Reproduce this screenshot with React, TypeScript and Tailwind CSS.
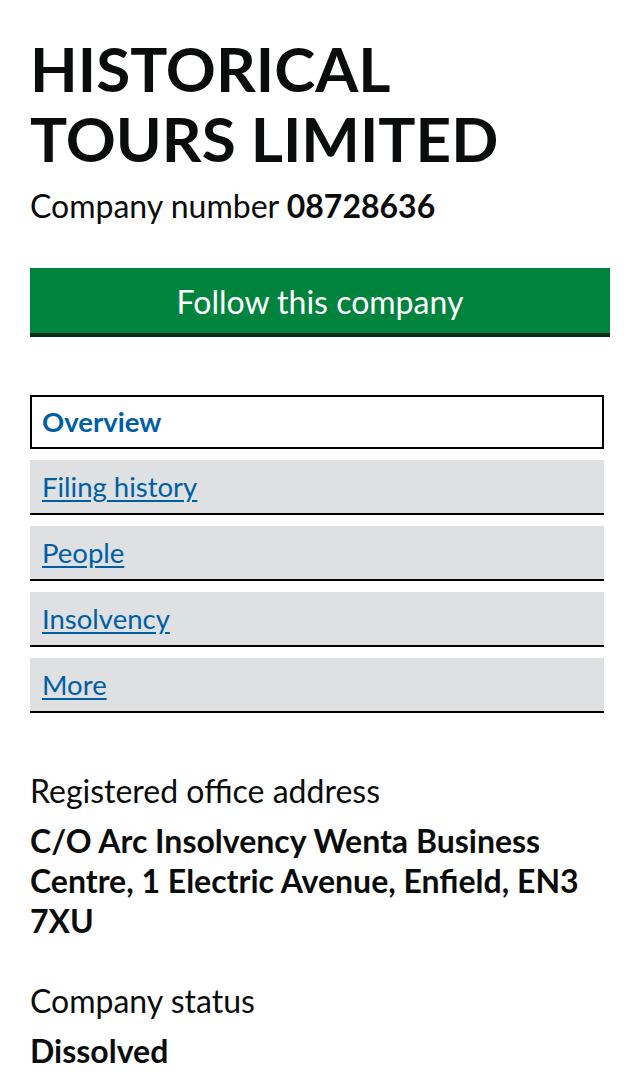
import React from 'react';

const tabs = ['Filing history', 'People', 'Insolvency', 'More'];

export default function App() {
  return (
    <div className="min-h-screen bg-white px-[30px] pt-[33px] text-[#0b0c0c] font-['Lato','Liberation_Sans',sans-serif]">
      <h1 className="text-[62px] font-bold leading-[70px]">
        HISTORICAL
        <br />
        TOURS LIMITED
      </h1>
      <p className="mt-[13px] text-[32px] leading-[40px]">
        Company number <strong className="font-bold">08728636</strong>
      </p>

      <button className="mt-[42px] flex h-[65px] w-full items-center justify-center bg-[#00843d] pt-[3px] text-[32px] text-white shadow-[0_4px_0_#002d18]">
        Follow this company
      </button>

      <ul className="mt-[62px] mr-[6px] flex flex-col gap-[11px]">
        <li className="flex h-[54px] items-center border-2 border-black bg-white px-[10px] text-[27.5px] font-bold text-[#005ea5]">
          Overview
        </li>
        {tabs.map((t) => (
          <li
            key={t}
            className="flex h-[55px] items-center border-b-2 border-black bg-[#dee0e2] px-[12px] text-[27.5px]"
          >
            <a href="#" className="text-[#005ea5] underline underline-offset-[3px]">
              {t}
            </a>
          </li>
        ))}
      </ul>

      <dl className="mt-[58px]">
        <dt className="text-[32px] leading-[40px]">Registered office address</dt>
        <dd className="mt-[10px] text-[32px] font-bold leading-[40px]">
          C/O Arc Insolvency Wenta Business Centre, 1 Electric Avenue, Enfield, EN3 7XU
        </dd>
        <dt className="mt-[40px] text-[32px] leading-[40px]">Company status</dt>
        <dd className="mt-[10px] text-[32px] font-bold leading-[40px]">Dissolved</dd>
      </dl>
    </div>
  );
}
